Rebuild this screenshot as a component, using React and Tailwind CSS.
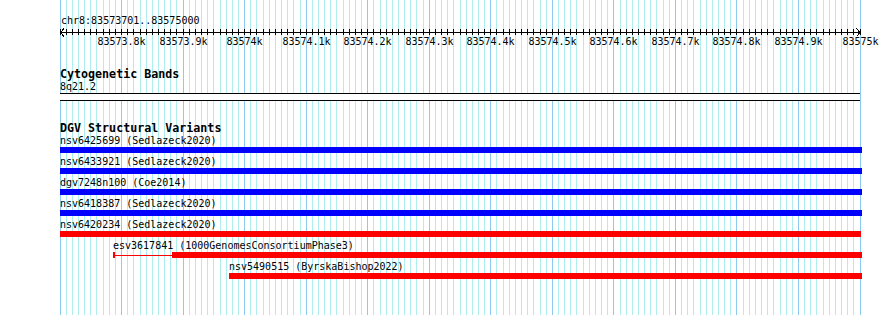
const X0 = 60;
const X1 = 860;
const START = 83573700;
const END = 83575000;

// one minor grid line every 10bp, a major one every 100bp
const STEP = (X1 - X0) / 130;
const grid = Array.from({ length: 131 }, (_, k) => Math.floor(X0 + k * STEP));
const majors = grid.filter((_, k) => k % 10 === 0);

const variants = [
  { name: 'nsv6425699 (Sedlazeck2020)', x: 60, end: 862, color: 'bg-[#0000ff]' },
  { name: 'nsv6433921 (Sedlazeck2020)', x: 60, end: 862, color: 'bg-[#0000ff]' },
  { name: 'dgv7248n100 (Coe2014)', x: 60, end: 862, color: 'bg-[#0000ff]' },
  { name: 'nsv6418387 (Sedlazeck2020)', x: 60, end: 862, color: 'bg-[#0000ff]' },
  { name: 'nsv6420234 (Sedlazeck2020)', x: 60, end: 861, color: 'bg-[#ff0000]' },
  { name: 'esv3617841 (1000GenomesConsortiumPhase3)', x: 113, end: 862, gap: [115, 172], color: 'bg-[#ff0000]' },
  { name: 'nsv5490515 (ByrskaBishop2022)', x: 229, end: 862, color: 'bg-[#ff0000]' },
];

function Ruler() {
  return (
    <svg width="890" height="20" className="block" shapeRendering="crispEdges">
      <line x1={X0} x2={X1} y1={5.5} y2={5.5} stroke="#000" />
      {grid.map((x, k) => (
        <line key={k} x1={x + 0.5} x2={x + 0.5} y1={2} y2={8} stroke="#000" />
      ))}
      <polyline points={`${X0 + 4},1.5 ${X0 + 0.5},5.5 ${X0 + 4},9.5`} fill="none" stroke="#000" />
      <polyline points={`${X1 - 3.5},1.5 ${X1},5.5 ${X1 - 3.5},9.5`} fill="none" stroke="#000" />
      {majors.slice(1).map((x, i) => (
        <text
          key={x}
          x={x + 0.5}
          y={17.5}
          textAnchor="middle"
          fontSize="10"
          fontFamily="'DejaVu Sans Mono', monospace"
          fill="#000"
        >
          {`${(START + (i + 1) * 100) / 1000}k`}
        </text>
      ))}
    </svg>
  );
}

function VariantRow({ v }) {
  return (
    <div className="h-[21px]">
      <div className="h-[12px] leading-[12px] whitespace-nowrap" style={{ marginLeft: v.x - X0 }}>
        {v.name}
      </div>
      {v.gap ? (
        <div className="flex items-center h-[6px]" style={{ marginLeft: v.x - X0 }}>
          <div className={`h-[6px] ${v.color}`} style={{ width: v.gap[0] - v.x }} />
          <div className={`h-px ${v.color}`} style={{ width: v.gap[1] - v.gap[0] }} />
          <div className={`h-[6px] ${v.color}`} style={{ width: v.end - v.gap[1] }} />
        </div>
      ) : (
        <div className={`h-[6px] ${v.color}`} style={{ marginLeft: v.x - X0, width: v.end - v.x }} />
      )}
    </div>
  );
}

export default function App() {
  return (
    <div className="relative w-[890px] h-[315px] bg-white overflow-hidden text-black font-['DejaVu_Sans_Mono',monospace] text-[10px]">
      {/* grid */}
      <svg className="absolute inset-0" width="890" height="315" shapeRendering="crispEdges">
        {grid.map((x, k) => (
          <line
            key={k}
            x1={x + 0.5}
            x2={x + 0.5}
            y1={0}
            y2={315}
            stroke={k % 10 === 0 ? '#8ccbf0' : '#afeeee'}
          />
        ))}
      </svg>

      <div className="relative pt-[15px]">
        <div className="pl-[61px] h-[12px] leading-[12px]">chr8:83573701..83575000</div>
        <Ruler />

        {/* Cytogenetic Bands */}
        <div className="mt-[20px] pl-[60px]">
          <div className="h-[14px] leading-[14px] text-[11.67px] font-bold">Cytogenetic Bands</div>
          <div className="h-[12px] leading-[12px]">8q21.2</div>
          <div className="w-[800px] h-[8px] bg-white border-y border-black" />
        </div>

        {/* DGV */}
        <div className="mt-[20px] pl-[60px]">
          <div className="h-[14px] leading-[14px] text-[11.67px] font-bold">DGV Structural Variants</div>
          {variants.map(v => (
            <VariantRow key={v.name} v={v} />
          ))}
        </div>
      </div>
    </div>
  );
}
